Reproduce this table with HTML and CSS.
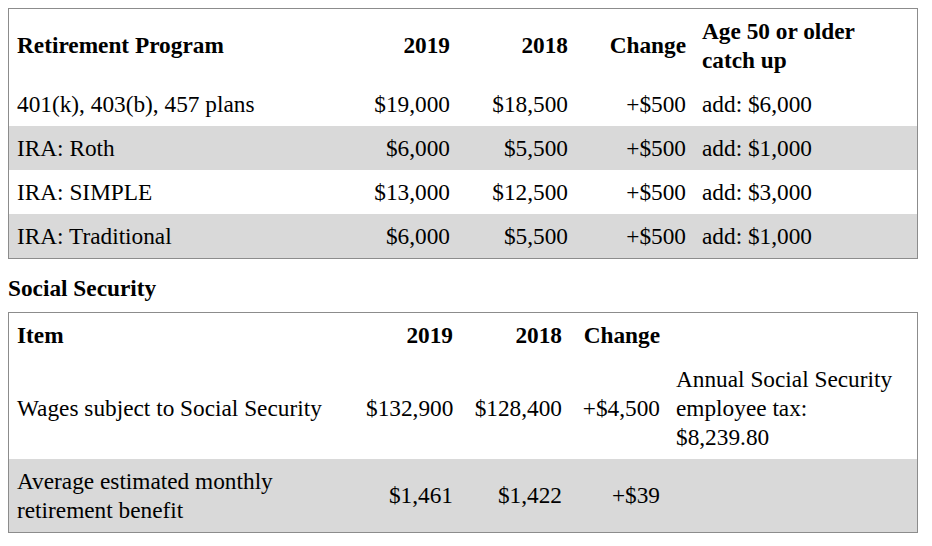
FILE: index.html
```html
<!DOCTYPE html>
<html lang="en">
<head>
<meta charset="utf-8">
<title>Contribution limits</title>
<link rel="stylesheet" href="styles.css">
</head>
<body>
<table class="limits t1">
  <colgroup>
    <col class="c1"><col class="c2"><col class="c3"><col class="c4"><col class="c5">
  </colgroup>
  <thead>
    <tr>
      <th class="left">Retirement Program</th>
      <th class="num">2019</th>
      <th class="num">2018</th>
      <th class="num">Change</th>
      <th class="left">Age 50 or older catch up</th>
    </tr>
  </thead>
  <tbody>
    <tr><td>401(k), 403(b), 457 plans</td><td class="num">$19,000</td><td class="num">$18,500</td><td class="num">+$500</td><td>add: $6,000</td></tr>
    <tr class="shade"><td>IRA: Roth</td><td class="num">$6,000</td><td class="num">$5,500</td><td class="num">+$500</td><td>add: $1,000</td></tr>
    <tr><td>IRA: SIMPLE</td><td class="num">$13,000</td><td class="num">$12,500</td><td class="num">+$500</td><td>add: $3,000</td></tr>
    <tr class="shade"><td>IRA: Traditional</td><td class="num">$6,000</td><td class="num">$5,500</td><td class="num">+$500</td><td>add: $1,000</td></tr>
  </tbody>
</table>
<h2 class="section-title">Social Security</h2>
<table class="limits t2">
  <colgroup>
    <col class="c1"><col class="c2"><col class="c3"><col class="c4"><col class="c5">
  </colgroup>
  <thead>
    <tr>
      <th class="left">Item</th>
      <th class="num">2019</th>
      <th class="num">2018</th>
      <th class="num">Change</th>
      <th class="left"></th>
    </tr>
  </thead>
  <tbody>
    <tr><td>Wages subject to Social Security</td><td class="num">$132,900</td><td class="num">$128,400</td><td class="num">+$4,500</td><td>Annual Social Security employee tax:<br>$8,239.80</td></tr>
    <tr class="shade"><td>Average estimated monthly retirement benefit</td><td class="num">$1,461</td><td class="num">$1,422</td><td class="num">+$39</td><td></td></tr>
  </tbody>
</table>
</body>
</html>
```
FILE: styles.css
```css
html, body {
  margin: 0;
  padding: 0;
  background: #ffffff;
}
body {
  margin: 8px;
  font-family: "Liberation Serif", "Times New Roman", serif;
  font-size: 23.3px;
  line-height: 29px;
  color: #000;
}
.limits {
  width: 910px;
  border-collapse: separate;
  border-spacing: 0;
  border: 1px solid #8c8c8c;
  table-layout: fixed;
}
.limits th, .limits td {
  padding: 7.5px 8px;
  vertical-align: middle;
  text-align: left;
}
.limits th {
  font-weight: bold;
}
.limits .num {
  text-align: right;
}
.shade td {
  background: #d9d9d9;
}
.t1 .c1 { width: 331px; }
.t1 .c2 { width: 118px; }
.t1 .c3 { width: 118px; }
.t1 .c4 { width: 118px; }
.t1 .c5 { width: 223px; }

.t2 .c1 { width: 349px; }
.t2 .c2 { width: 103px; }
.t2 .c3 { width: 109px; }
.t2 .c4 { width: 98px; }
.t2 .c5 { width: 249px; }

.section-title {
  margin: 15px 0 9px;
  font-size: 23.3px;
  line-height: 29px;
  font-weight: bold;
}
```
